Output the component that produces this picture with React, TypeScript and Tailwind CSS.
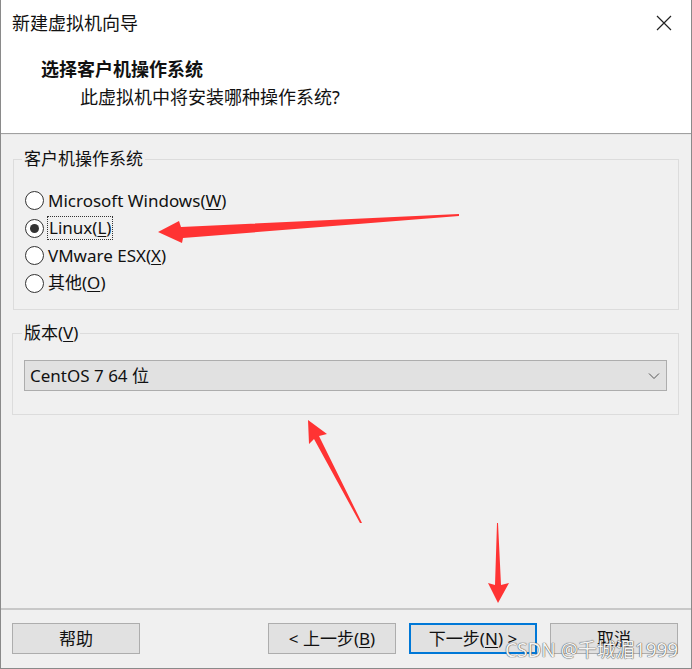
import React from 'react'

const FONT = { fontFamily: '"Noto Sans", "Noto Sans CJK SC", sans-serif' }

// ─── Radio button ─────────────────────────────────────────────────────────────
function Radio({ checked, focused, label, mnemonic }: {
  checked?: boolean; focused?: boolean; label: string; mnemonic: string
}) {
  return (
    <div className="flex items-center h-[27.5px]">
      <span className="w-[19px] h-[19px] ml-[11px] rounded-full border border-[#333] bg-white flex items-center justify-center shrink-0">
        {checked && <span className="w-[9px] h-[9px] rounded-full bg-[#333]" />}
      </span>
      <span className={focused
        ? 'ml-[3px] px-[1px] leading-[22px] border border-dotted border-[#333]'
        : 'ml-[4px] leading-[22px]'}>
        {label}(<span className="underline underline-offset-2">{mnemonic}</span>)
      </span>
    </div>
  )
}

function Button({ children, primary }: { children: React.ReactNode; primary?: boolean }) {
  return (
    <button className={primary
      ? 'w-[128px] h-[31px] bg-[#e1e1e1] border-2 border-[#0078d7] text-[17px] leading-none text-[#111]'
      : 'w-[128px] h-[31px] bg-[#e1e1e1] border border-[#adadad] text-[17px] leading-none text-[#111]'}>
      {children}
    </button>
  )
}

export default function App() {
  return (
    <div className="relative w-[692px] h-[669px] flex flex-col bg-white border-l border-r border-b border-[#8a8a8a] text-[#111] overflow-hidden" style={FONT}>
      {/* Title bar */}
      <div className="h-[46px] flex items-center justify-between pl-[11px] pr-[19px] shrink-0">
        <span className="text-[18px]">新建虚拟机向导</span>
        <svg width="16" height="16" viewBox="0 0 16 16" className="mb-[1px]">
          <path d="M1 1L15 15M15 1L1 15" stroke="#222" strokeWidth="1.2" />
        </svg>
      </div>

      {/* Header */}
      <div className="h-[87px] shrink-0 pl-[40px] pt-[9px]">
        <p className="text-[18px] font-bold leading-[28px]">选择客户机操作系统</p>
        <p className="text-[18px] leading-[28px] pl-[39px]">此虚拟机中将安装哪种操作系统?</p>
      </div>
      <div className="h-[2px] border-t border-[#a0a0a0] bg-[#e8e8e8] shrink-0" />

      {/* Body */}
      <div className="flex-1 bg-[#f0f0f0] flex flex-col px-[11px] pt-[13px] text-[17px]">
        <fieldset className="border border-[#dcdcdc] h-[162px] mr-[1px] pt-[17px] ml-[1px]">
          <legend className="ml-[8px] px-[2px] leading-[22px]">客户机操作系统</legend>
          <Radio label="Microsoft Windows" mnemonic="W" />
          <Radio checked focused label="Linux" mnemonic="L" />
          <Radio label="VMware ESX" mnemonic="X" />
          <Radio label="其他" mnemonic="O" />
        </fieldset>

        <fieldset className="border border-[#dcdcdc] h-[93px] mt-[12px] mr-[1px] pt-[16px]">
          <legend className="ml-[9px] px-[2px] leading-[22px]">
            版本(<span className="underline underline-offset-2">V</span>)
          </legend>
          <div className="mx-[11px] h-[31px] bg-[#e1e1e1] border border-[#adadad] flex items-center justify-between pl-[5px] pr-[6px]">
            <span>CentOS 7 64 位</span>
            <svg width="12" height="8" viewBox="0 0 12 8">
              <path d="M1 1.5L6 6.5L11 1.5" fill="none" stroke="#555" strokeWidth="1" />
            </svg>
          </div>
        </fieldset>
      </div>

      {/* Footer */}
      <div className="h-[60px] shrink-0 bg-[#f0f0f0] border-t-2 border-[#c8c8c8] flex items-start pt-[13px] pl-[11px] pr-[13px]">
        <Button>帮助</Button>
        <div className="flex-1" />
        <div className="flex gap-[13px]">
          <Button>&lt; 上一步(<span className="underline underline-offset-2">B</span>)</Button>
          <Button primary>下一步(<span className="underline underline-offset-2">N</span>) &gt;</Button>
          <Button>取消</Button>
        </div>
      </div>

      {/* Watermark */}
      <span className="absolute left-[504px] top-[637px] text-[19px] leading-[26px] text-[#f4f4f4] [text-shadow:0_0_1px_#444,0_0_1px_#444] pointer-events-none">
        CSDN @千城湄1999
      </span>

      {/* Red annotation arrows */}
      <svg className="absolute inset-0 pointer-events-none" width="692" height="669">
        <polygon fill="#ff3333" points="157,232 178,221 180,227 458,214 458,216 182,238 181,243" />
        <polygon fill="#ff3333" points="307,420 326,434 318,436 361,523 359,523 313,439 308,444" />
        <polygon fill="#ff3333" points="497,603 508,583 500,585 497,523 496,523 494,585 487,583" />
      </svg>
    </div>
  )
}
